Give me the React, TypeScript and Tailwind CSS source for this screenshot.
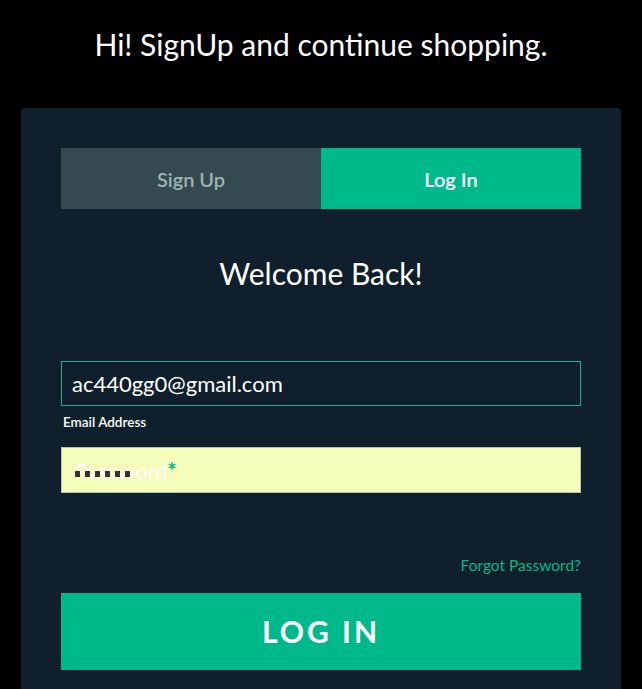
import React from 'react';

const font = { fontFamily: '"Lato", "Open Sans", sans-serif' };

const App: React.FC = () => {
  return (
    <div className="min-h-[689px] w-[642px] bg-black text-white overflow-hidden" style={font}>
      <div className="h-[108px] pt-[26px] text-center">
        <h1 className="text-[30px] leading-[36px] font-normal">Hi! SignUp and continue shopping.</h1>
      </div>

      <div className="ml-[21px] w-[600px] rounded-[4px] bg-[#0f1f2b] px-[40px] pt-[40px] pb-[40px] shadow-[0_4px_10px_rgba(0,0,0,0.3)]">
        <div className="grid grid-cols-2 h-[61px]">
          <button className="bg-[#344950] text-[#9fb3b0] text-[20px] font-semibold">Sign Up</button>
          <button className="bg-[#00b98a] text-white text-[20px] font-semibold">Log In</button>
        </div>

        <h2 className="mt-[46px] text-center text-[30px] leading-[36px] font-normal">Welcome Back!</h2>

        <div className="mt-[70px]">
          <div className="h-[45px] border border-[#16b489] flex items-center px-[10px] text-[22px]">
            ac440gg0@gmail.com
          </div>
          <label className="block mt-[7px] ml-[2px] text-[13.5px] leading-[18px] font-semibold">Email Address</label>
        </div>

        <div className="relative mt-[16px] h-[46px] bg-[#f4fdb9] border border-[#b7c2b4] flex items-center px-[13px] text-[22px]">
          <span className="text-white">Password</span>
          <span className="text-[#00b98a] font-bold">*</span>
          <div className="absolute left-[13px] top-[23px] flex gap-[5px]">
            <span className="w-[5px] h-[6px] bg-[#333]" />
            <span className="w-[5px] h-[6px] bg-[#333]" />
            <span className="w-[5px] h-[6px] bg-[#333]" />
            <span className="w-[5px] h-[6px] bg-[#333]" />
            <span className="w-[5px] h-[6px] bg-[#333]" />
            <span className="w-[5px] h-[6px] bg-[#333]" />
          </div>
        </div>

        <div className="mt-[63px] text-right text-[15.5px] leading-[18px] text-[#00b98a]">Forgot Password?</div>

        <button className="mt-[19px] w-full h-[77px] bg-[#00b98a] text-white text-[30px] font-bold tracking-[0.1em]">
          LOG IN
        </button>
      </div>
    </div>
  );
};

export default App;
